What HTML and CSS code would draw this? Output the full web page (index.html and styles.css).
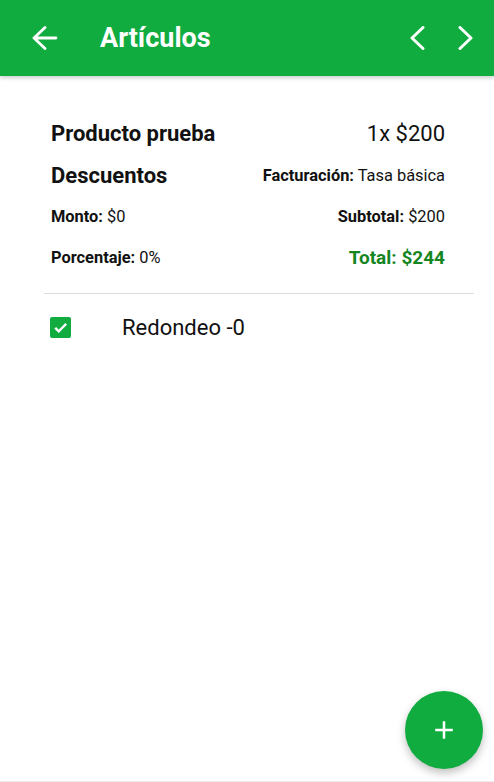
FILE: index.html
```html
<!DOCTYPE html>
<html lang="es">
<head>
  <meta charset="UTF-8" />
  <meta name="viewport" content="width=device-width, initial-scale=1.0" />
  <title>Artículos</title>
  <link rel="stylesheet" href="styles.css">
</head>
<body>
  <header class="topbar">
    <svg class="back" viewBox="0 0 26 24" width="26" height="24"><path d="M2 12H24M13 1.5 2 12l11 10.5" fill="none" stroke="#fff" stroke-width="2.8" stroke-linecap="round" stroke-linejoin="round"/></svg>
    <h1>Artículos</h1>
    <div class="nav">
      <svg viewBox="0 0 16 24" width="16" height="24"><path d="M14 1.5 3 12l11 10.5" fill="none" stroke="#fff" stroke-width="3" stroke-linecap="round" stroke-linejoin="round"/></svg>
      <svg viewBox="0 0 16 24" width="16" height="24"><path d="M2 1.5 13 12 2 22.5" fill="none" stroke="#fff" stroke-width="3" stroke-linecap="round" stroke-linejoin="round"/></svg>
    </div>
  </header>

  <main>
    <section class="detalle">
      <div class="fila fila-grande">
        <span class="titulo">Producto prueba</span>
        <span class="precio">1x $200</span>
      </div>
      <div class="fila">
        <span class="titulo">Descuentos</span>
        <span class="dato"><b>Facturación:</b> Tasa básica</span>
      </div>
      <div class="fila">
        <span class="dato"><b>Monto:</b> $0</span>
        <span class="dato"><b>Subtotal:</b> $200</span>
      </div>
      <div class="fila">
        <span class="dato"><b>Porcentaje:</b> 0%</span>
        <span class="total">Total: $244</span>
      </div>
    </section>

    <hr>

    <div class="opcion">
      <span class="check">
        <svg viewBox="0 0 24 24" width="17" height="17"><path d="M4.5 12.5 9.5 17.5 20 7" fill="none" stroke="#fff" stroke-width="3.4"/></svg>
      </span>
      <span class="opcion-texto">Redondeo -0</span>
    </div>
  </main>

  <button class="fab" aria-label="Agregar">
    <svg viewBox="0 0 24 24" width="30" height="30"><path d="M19 13h-6v6h-2v-6H5v-2h6V5h2v6h6v2z" fill="#fff"/></svg>
  </button>
</body>
</html>
```

FILE: styles.css
```css
body {
  margin: 0;
  height: 782px;
  font-family: Roboto, "Noto Sans", sans-serif;
  color: #111;
  background: #fff;
  border-bottom: 1px solid #ececec;
  box-sizing: border-box;
}
.topbar {
  height: 76px;
  background: #10ac3f;
  display: flex;
  align-items: center;
  padding: 0 20px 0 32px;
  box-shadow: 0 2px 4px rgba(0,0,0,0.2);
}
.topbar h1 {
  margin: 0 0 0 42px;
  color: #fff;
  font-size: 27px;
  font-weight: 700;
  flex: 1;
}
.nav {
  display: flex;
  gap: 33px;
}
main {
  padding: 0 20px;
}
.detalle {
  padding: 35px 29px 15px 31px;
}
.fila {
  display: flex;
  justify-content: space-between;
  align-items: center;
  height: 41px;
}
.fila-grande {
  height: 44px;
}
.titulo {
  font-size: 22px;
  font-weight: 700;
}
.precio {
  font-size: 22px;
}
.dato {
  font-size: 16.4px;
}
.dato b {
  font-weight: 700;
}
.total {
  font-size: 19px;
  font-weight: 700;
  color: #15861f;
}
hr {
  margin: 0 0 0 24px;
  border: 0;
  border-top: 1px solid #dcdcdc;
}
.opcion {
  display: flex;
  align-items: center;
  padding: 21px 30px;
}
.check {
  width: 21px;
  height: 21px;
  border-radius: 2px;
  background: #10ac3f;
  display: flex;
  align-items: center;
  justify-content: center;
}
.opcion-texto {
  margin-left: 51px;
  font-size: 22px;
}
.fab {
  position: fixed;
  right: 11px;
  bottom: 13px;
  width: 78px;
  height: 78px;
  border-radius: 50%;
  border: 0;
  background: #10ac3f;
  display: flex;
  align-items: center;
  justify-content: center;
  box-shadow: 0 4px 8px rgba(0,0,0,0.25);
}
```
